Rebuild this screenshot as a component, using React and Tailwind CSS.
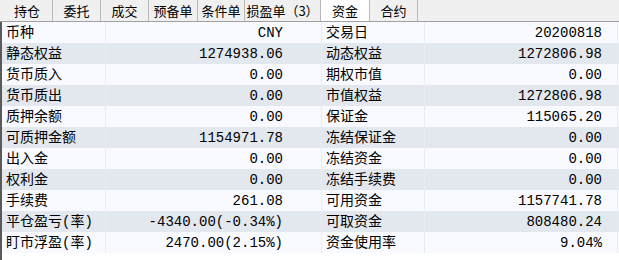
import React from 'react';

const tabs = [
  { label: '持仓', w: 'w-[51px]' },
  { label: '委托', w: 'w-[48px]' },
  { label: '成交', w: 'w-[48px]' },
  { label: '预备单', w: 'w-[49px]' },
  { label: '条件单', w: 'w-[47px]' },
  { label: '损盈单（3）', w: 'w-[76px]' },
  { label: '资金', w: 'w-[49px]', active: true },
  { label: '合约', w: 'w-[48px]' },
];

const rows = [
  ['币种', 'CNY', '交易日', '20200818'],
  ['静态权益', '1274938.06', '动态权益', '1272806.98'],
  ['货币质入', '0.00', '期权市值', '0.00'],
  ['货币质出', '0.00', '市值权益', '1272806.98'],
  ['质押余额', '0.00', '保证金', '115065.20'],
  ['可质押金额', '1154971.78', '冻结保证金', '0.00'],
  ['出入金', '0.00', '冻结资金', '0.00'],
  ['权利金', '0.00', '冻结手续费', '0.00'],
  ['手续费', '261.08', '可用资金', '1157741.78'],
  ['平仓盈亏(率)', '-4340.00(-0.34%)', '可取资金', '808480.24'],
  ['盯市浮盈(率)', '2470.00(2.15%)', '资金使用率', '9.04%'],
];

const font = { fontFamily: '"Liberation Mono", "Noto Sans CJK SC", monospace' };

export default function App() {
  return (
    <div className="w-[619px] h-[260px] bg-white overflow-hidden text-black" style={font}>
      {/* tab strip */}
      <div className="h-[22px] flex items-end bg-[#f0f0f0] border-b border-[#a0a0a0] pl-[2px]">
        {tabs.map((t) => (
          <div
            key={t.label}
            className={`${t.w} h-[21px] flex items-center justify-center text-[13px] leading-none border-r border-[#b8b8b8] ${
              t.active ? 'bg-white h-[22px]' : 'bg-[#f0f0f0]'
            }`}
            style={{ fontFamily: '"Noto Sans CJK SC", sans-serif' }}
          >
            {t.label}
          </div>
        ))}
      </div>

      {/* fund grid */}
      <div className="border-l-2 border-[#5a5a5a] h-[238px]">
        {rows.map((r, i) => (
          <div
            key={r[0]}
            className={`h-[21px] flex text-[14px] leading-none ${i % 2 ? 'bg-[#e3e8ef]' : 'bg-[#f8faff]'}`}
          >
            <div className="w-[104px] flex items-center pl-[4px] border-r border-[#e9edf3]">{r[0]}</div>
            <div className="w-[216px] flex items-center justify-end pr-[38px] border-r border-[#e9edf3]">{r[1]}</div>
            <div className="w-[103px] flex items-center pl-[4px] border-r border-[#e9edf3]">{r[2]}</div>
            <div className="w-[193px] flex items-center justify-end pr-[15px] border-r border-[#e9edf3]">{r[3]}</div>
          </div>
        ))}
      </div>
    </div>
  );
}
